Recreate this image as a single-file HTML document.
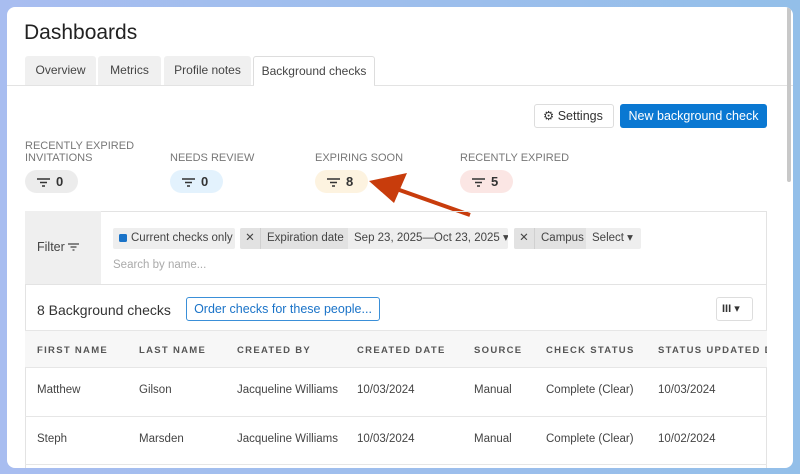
<!DOCTYPE html>
<html><head><style>
*{box-sizing:border-box;margin:0;padding:0}
body{width:800px;height:474px;overflow:hidden;background:linear-gradient(90deg,#a8bdf0,#93bfe9);font-family:"Liberation Sans",sans-serif;color:#333;position:relative}
.card{position:absolute;left:7px;top:7px;width:786px;height:461px;background:#fff;border-radius:8px;overflow:hidden}
.a{position:absolute}
h1{position:absolute;left:17px;top:14px;font-size:21px;font-weight:normal;color:#222}
.tab{position:absolute;top:49px;height:29px;background:#f0f0f0;border-radius:3px 3px 0 0;font-size:12px;color:#444;text-align:center;line-height:29px}
.lbl{position:absolute;font-size:11px;color:#777;line-height:12px}
.pill{position:absolute;top:163px;width:53px;height:23px;border-radius:12px;font-size:13px;font-weight:bold;color:#333;line-height:23px;padding-left:12px}
.pill svg{vertical-align:-1px;margin-right:6px}
.chip{position:absolute;top:221px;height:21px;background:#eee;border-radius:2px;font-size:11.5px;line-height:21px;color:#444;white-space:nowrap;overflow:hidden}
.th{position:absolute;top:338px;font-size:9.5px;letter-spacing:1.3px;font-weight:bold;color:#555;white-space:nowrap}
.td{position:absolute;font-size:11.5px;color:#444}
</style></head><body>
<div class="card">
<h1>Dashboards</h1>
<div class="tab" style="left:18px;width:71px">Overview</div>
<div class="tab" style="left:91px;width:63px">Metrics</div>
<div class="tab" style="left:157px;width:87px">Profile notes</div>
<div class="tab" style="left:246px;width:122px;background:#fff;border:1px solid #ddd;border-bottom:none">Background checks</div>
<div class="a" style="left:0;top:78px;width:786px;height:1px;background:#e3e3e3"></div>
<div class="a" style="left:247px;top:78px;width:120px;height:1px;background:#fff"></div>

<div class="a" style="left:527px;top:97px;width:80px;height:24px;border:1px solid #ddd;border-radius:3px;font-size:12.5px;line-height:22px;padding-left:8px;color:#333"><span>⚙</span> Settings</div>
<div class="a" style="left:613px;top:97px;width:147px;height:24px;background:#0a78d2;border-radius:3px;font-size:12.5px;line-height:24px;color:#fff;text-align:center">New background check</div>

<div class="lbl" style="left:18px;top:133px">RECENTLY EXPIRED<br>INVITATIONS</div>
<div class="lbl" style="left:163px;top:145px">NEEDS REVIEW</div>
<div class="lbl" style="left:308px;top:145px">EXPIRING SOON</div>
<div class="lbl" style="left:453px;top:145px">RECENTLY EXPIRED</div>
<div class="pill" style="left:18px;background:#ececec"><svg width="13" height="9"><path d="M0 1h13M3 4.5h7M5 8h3" stroke="#333" stroke-width="1.5"/></svg>0</div>
<div class="pill" style="left:163px;background:#e3f2fd"><svg width="13" height="9"><path d="M0 1h13M3 4.5h7M5 8h3" stroke="#333" stroke-width="1.5"/></svg>0</div>
<div class="pill" style="left:308px;background:#fdf3e0"><svg width="13" height="9"><path d="M0 1h13M3 4.5h7M5 8h3" stroke="#333" stroke-width="1.5"/></svg>8</div>
<div class="pill" style="left:453px;background:#fbe6e4"><svg width="13" height="9"><path d="M0 1h13M3 4.5h7M5 8h3" stroke="#333" stroke-width="1.5"/></svg>5</div>
<svg class="a" style="left:360px;top:163px" width="105" height="47"><path d="M103 45L24 17" stroke="#c83c0c" stroke-width="4"/><path d="M2 11L40 3L27 33Z" fill="#c83c0c"/></svg>

<div class="a" style="left:18px;top:204px;width:742px;height:260px;border:1px solid #e3e3e3;border-bottom:none"></div>
<div class="a" style="left:18px;top:204px;width:76px;height:73px;background:#efefef;font-size:12.5px;line-height:73px;padding-left:12px;color:#444">Filter <svg width="11" height="8"><path d="M0 1h11M2.5 4h6M4.5 7h2" stroke="#444" stroke-width="1.2"/></svg></div>
<div class="chip" style="left:106px;width:122px;padding-left:6px"><span style="display:inline-block;width:8px;height:8px;background:#1a73c8;border-radius:1.5px;vertical-align:-1px;margin-right:4px"></span>Current checks only</div>
<div class="chip" style="left:233px;width:268px;"><span style="display:inline-block;width:20px;text-align:center;background:#e2e2e2">✕</span><span style="display:inline-block;width:88px;background:#e2e2e2;padding-left:6px;border-left:1px solid #d0d0d0">Expiration date</span><span style="padding-left:6px">Sep 23, 2025—Oct 23, 2025 ▾</span></div>
<div class="chip" style="left:507px;width:127px"><span style="display:inline-block;width:20px;text-align:center;background:#e2e2e2">✕</span><span style="display:inline-block;width:52px;background:#e2e2e2;padding-left:6px;border-left:1px solid #d0d0d0">Campus</span><span style="padding-left:6px">Select ▾</span></div>
<div class="a" style="left:106px;top:252px;font-size:11.5px;color:#aaa">Search by name...</div>
<div class="a" style="left:18px;top:277px;width:742px;height:1px;background:#e3e3e3"></div>

<div class="a" style="left:30px;top:295px;font-size:14px;color:#333">8 Background checks</div>
<div class="a" style="left:179px;top:290px;width:194px;height:24px;border:1px solid #3a8fd8;border-radius:3px;font-size:12.5px;line-height:22px;color:#1a73c8;text-align:center">Order checks for these people...</div>
<div class="a" style="left:709px;top:290px;width:37px;height:24px;border:1px solid #ddd;border-radius:3px;font-size:11px;line-height:22px;padding-left:5px;color:#333"><b>III</b> ▾</div>

<div class="a" style="left:18px;top:323px;width:742px;height:38px;background:#f7f7f7;border-top:1px solid #e6e6e6;border-bottom:1px solid #e6e6e6"></div>
<div class="th" style="left:30px">FIRST NAME</div>
<div class="th" style="left:132px">LAST NAME</div>
<div class="th" style="left:230px">CREATED BY</div>
<div class="th" style="left:350px">CREATED DATE</div>
<div class="th" style="left:467px">SOURCE</div>
<div class="th" style="left:539px">CHECK STATUS</div>
<div class="th" style="left:651px;width:109px;overflow:hidden">STATUS UPDATED D</div>

<div class="td" style="left:30px;top:377px">Matthew</div><div class="td" style="left:132px;top:377px">Gilson</div><div class="td" style="left:230px;top:377px">Jacqueline Williams</div><div class="td" style="left:350px;top:377px">10/03/2024</div><div class="td" style="left:467px;top:377px">Manual</div><div class="td" style="left:539px;top:377px">Complete (Clear)</div><div class="td" style="left:651px;top:377px">10/03/2024</div>
<div class="a" style="left:18px;top:409px;width:742px;height:1px;background:#e6e6e6"></div>
<div class="td" style="left:30px;top:426px">Steph</div><div class="td" style="left:132px;top:426px">Marsden</div><div class="td" style="left:230px;top:426px">Jacqueline Williams</div><div class="td" style="left:350px;top:426px">10/03/2024</div><div class="td" style="left:467px;top:426px">Manual</div><div class="td" style="left:539px;top:426px">Complete (Clear)</div><div class="td" style="left:651px;top:426px">10/02/2024</div>
<div class="a" style="left:18px;top:457px;width:742px;height:1px;background:#e6e6e6"></div>
<div class="a" style="left:780px;top:0;width:4px;height:175px;background:#c8c8c8;border-radius:2px"></div>
</div>
</body></html>
